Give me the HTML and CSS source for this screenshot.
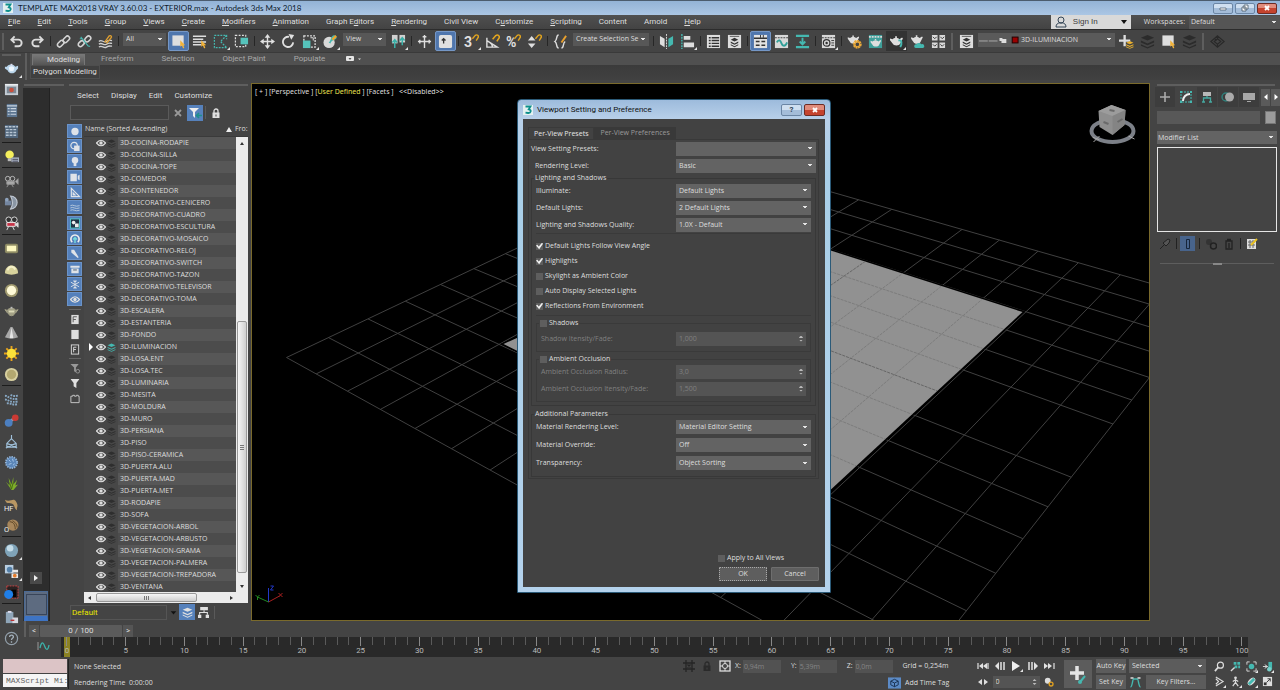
FILE: index.html
```html
<!DOCTYPE html>
<html lang="en">
<head>
<meta charset="utf-8">
<title>TEMPLATE MAX2018 VRAY 3.60.03 - EXTERIOR.max - Autodesk 3ds Max 2018</title>
<link rel="stylesheet" href="styles.css">
</head>
<body>
<svg class="defs" aria-hidden="true">
  <symbol id="logo" viewBox="0 0 10 10"><rect width="10" height="10" fill="#e4f1f1"/><path d="M2.500 1.500h5L5.800 4.300c3 .4 2.300 4-.8 3.700L2.500 7.600" fill="none" stroke="#0d8f8c" stroke-width="1.800"/></symbol>
  <symbol id="undo" viewBox="0 0 16 16"><path d="M3 6h7a3 3 0 0 1 0 7H6M6 2.500L2.500 6L6 9.500" fill="none" stroke="#dcdcdc" stroke-width="2"/></symbol>
  <symbol id="redo" viewBox="0 0 16 16"><path d="M13 6H6a3 3 0 0 0 0 7h4M10 2.500L13.500 6L10 9.500" fill="none" stroke="#dcdcdc" stroke-width="2"/></symbol>
  <symbol id="link" viewBox="0 0 16 16"><g fill="none" stroke="#d4d4d4" stroke-width="1.700"><rect x="1" y="8" width="8" height="4.600" rx="2.300" transform="rotate(-45 5 10.300)"/><rect x="7" y="3.400" width="8" height="4.600" rx="2.300" transform="rotate(-45 11 5.700)"/></g></symbol>
  <symbol id="unlink" viewBox="0 0 16 16"><g fill="none" stroke="#d4d4d4" stroke-width="1.700"><rect x="1" y="8" width="7" height="4.600" rx="2.300" transform="rotate(-45 4.500 10.300)"/><rect x="8" y="3" width="7" height="4.600" rx="2.300" transform="rotate(-45 11.500 5.300)"/></g><path d="M4 3l8 10M12 13l2 0M3 5l2 0" stroke="#45b8b0" stroke-width="1.200"/></symbol>
  <symbol id="bind" viewBox="0 0 16 16"><path d="M1 8c3-3 5 2 8 0s4-1 6-1M1 11c3-3 5 2 8 0s4-1 6-1M1 14c3-3 5 2 8 0s4-1 6-1" fill="none" stroke="#cfcfcf" stroke-width="1.400"/><path d="M7 9l5-7c2-1 3 1 2 2L9 10" fill="none" stroke="#e0a030" stroke-width="1.400"/></symbol>
  <symbol id="cursor" viewBox="0 0 8 10"><path d="M1 0v8l2-1.500L4.500 10l1.500-1-1.500-3H7z" fill="#f2b33a"/></symbol>
  <symbol id="selobj" viewBox="0 0 16 16"><rect x="1.500" y="1.500" width="12" height="11" fill="#dedede"/><use href="#cursor" x="9" y="6" width="7" height="10"/></symbol>
  <symbol id="selname" viewBox="0 0 16 16"><path d="M1 2.500h14M1 5.500h11M1 8.500h14M1 11.500h9" stroke="#dedede" stroke-width="1.600"/><use href="#cursor" x="9" y="6" width="7" height="10"/></symbol>
  <symbol id="selregion" viewBox="0 0 16 16"><path d="M1.500 1.500h13v4M14.500 14.500h-13v-13M14.500 1.500L8 8l6.500 6.500" fill="none" stroke="#45b8b0" stroke-width="1.300" stroke-dasharray="2 1.200"/></symbol>
  <symbol id="crossing" viewBox="0 0 16 16"><rect x="1.500" y="1.500" width="11" height="12" fill="none" stroke="#dedede" stroke-width="1.300" stroke-dasharray="2 1.500"/><rect x="7" y="4" width="8" height="7" fill="#55c3bb"/></symbol>
  <symbol id="move" viewBox="0 0 16 16"><path d="M8 2v12M2 8h12" stroke="#e0e0e0" stroke-width="1.500"/><path d="M8 0l3 4H5zM8 16l3-4H5zM0 8l4-3v6zM16 8l-4-3v6z" fill="#e0e0e0"/></symbol>
  <symbol id="rotate" viewBox="0 0 16 16"><path d="M13 9a5.500 5.500 0 1 1-4.500-6" fill="none" stroke="#e0e0e0" stroke-width="2"/><path d="M8 0l6 1-3 5z" fill="#e0e0e0"/></symbol>
  <symbol id="scale" viewBox="0 0 16 16"><rect x="2" y="2" width="12" height="12" fill="none" stroke="#e0e0e0" stroke-width="1.400" stroke-dasharray="2 1.300"/><rect x="1" y="7" width="8" height="8" fill="#55c3bb"/><path d="M9 4h3v3" stroke="#e0e0e0" fill="none"/></symbol>
  <symbol id="place" viewBox="0 0 16 16"><circle cx="6.500" cy="9" r="6" fill="#d8d8d8"/><path d="M6 9c2-1 2-5 4-7s6 1 4 3-5 1-6 5z" fill="#45b8b0"/><path d="M10 6l4-4" stroke="#f0a52c" stroke-width="2.500"/></symbol>
  <symbol id="pivot" viewBox="0 0 16 16"><rect x="1" y="1" width="6" height="9" fill="#d0d0d0"/><rect x="9" y="1" width="6" height="8" fill="#d0d0d0"/><path d="M4 6v9M1.500 9L4 6l2.500 3M12 4v8M9.500 7L12 4l2.500 3" stroke="#3bb0a8" stroke-width="1.600" fill="none"/></symbol>
  <symbol id="manip" viewBox="0 0 16 16"><path d="M8 1v14M1 8h14M6 3h4M3 6v4M13 6v4" stroke="#dedede" stroke-width="1.500"/></symbol>
  <symbol id="kbd" viewBox="0 0 16 16"><rect x="1" y="1" width="14" height="14" rx="2" fill="#e0e0e0"/><path d="M6 10V5M4 7l2-2 2 2" stroke="#333" stroke-width="1.400" fill="none"/></symbol>
  <symbol id="magnet" viewBox="0 0 8 8"><path d="M1 5l3-3.500c2-1.500 4 .5 3 2.500L5 7" fill="none" stroke="#e3a51e" stroke-width="1.500"/></symbol>
  <symbol id="anglesnap" viewBox="0 0 16 16"><path d="M2 4v10h11L2 7M8 14a6 6 0 0 0-3-5" fill="none" stroke="#dedede" stroke-width="1.500"/><use href="#magnet" x="7" y="0" width="9" height="9"/></symbol>
  <symbol id="spinsnap" viewBox="0 0 16 16"><path d="M1 7l4-5 4 5zM1 10l4 5 4-5z" fill="#dedede"/><use href="#magnet" x="8" y="0" width="8" height="8"/></symbol>
  <symbol id="braces" viewBox="0 0 16 16"><path d="M6 1C3 1 5 6 2 8c3 2 1 7 4 7M9 15c3 0 1-5 4-7" fill="none" stroke="#dedede" stroke-width="1.500"/><path d="M9 9l5-7" stroke="#e9a02e" stroke-width="2"/></symbol>
  <symbol id="mirror" viewBox="0 0 16 16"><path d="M1 2l5 3v9l-5-3z" fill="#dedede"/><path d="M15 2l-5 3v9l5-3z" fill="#45b8b0"/><path d="M8 0v16" stroke="#ddd" stroke-dasharray="2 1"/></symbol>
  <symbol id="align" viewBox="0 0 16 16"><path d="M2 0v16" stroke="#45b8b0" stroke-width="1.500" stroke-dasharray="2 1"/><path d="M4 2h7v4H4zM4 9h11v5H4z" fill="#dedede"/></symbol>
  <symbol id="listbox" viewBox="0 0 16 16"><rect x="1" y="1" width="14" height="14" fill="#dedede"/><path d="M3 4h2M6 4h8M3 7h2M6 7h8M3 10h2M6 10h8M3 13h2M6 13h8" stroke="#333" stroke-width="1.500"/></symbol>
  <symbol id="layerbox" viewBox="0 0 16 16"><rect x="1" y="1" width="14" height="14" fill="#dedede"/><path d="M8 4l4 2-4 2-4-2zM4 8l4 2 4-2v1.500l-4 2-4-2zM4 11l4 2 4-2v1l-4 2-4-2z" fill="#333"/><path d="M3 2.500h10" stroke="#555"/></symbol>
  <symbol id="ribbonbox" viewBox="0 0 16 16"><rect x="1" y="1" width="14" height="14" fill="#e2e2e2"/><path d="M1 4.500h14M3 8h4M9 8h4M3 12h4M9 12h4" stroke="#333" stroke-width="1.600"/><path d="M8 1v3M11 1v3" stroke="#333"/></symbol>
  <symbol id="curve" viewBox="0 0 16 16"><rect x="1" y="1" width="14" height="14" fill="#d8d8d8"/><path d="M1 4h14" stroke="#444" stroke-width="1.200" stroke-dasharray="2 1"/><path d="M3 9c2-4 4-2 5 1s4 4 6-1" fill="none" stroke="#2f9f98" stroke-width="2"/></symbol>
  <symbol id="schem" viewBox="0 0 16 16"><path d="M1 2h14M1 14h14" stroke="#45b8b0" stroke-width="2.600"/><path d="M8 4v7M5 8l3 3 3-3" stroke="#45b8b0" stroke-width="2" fill="none"/></symbol>
  <symbol id="matedit" viewBox="0 0 16 16"><rect x="1" y="1" width="14" height="14" fill="#d8d8d8"/><path d="M1 4h14" stroke="#333" stroke-dasharray="2 1"/><circle cx="6" cy="9.500" r="3.500" fill="none" stroke="#333" stroke-width="1.300"/><circle cx="6" cy="9.500" r="1.300" fill="#333"/><path d="M11 7h3M11 9.500h3M11 12h3" stroke="#333"/></symbol>
  <symbol id="pot" viewBox="0 0 16 12"><path d="M4 4c1-2 7-2 8 0l3-2 1 1-3 6c-1 3-8 3-9 0L1 5V3z" fill="#dedede"/><path d="M7 1.500h2" stroke="#dedede" stroke-width="2"/></symbol>
  <symbol id="potgear" viewBox="0 0 16 16"><use href="#pot" x="0" y="1" width="13" height="10"/><circle cx="11" cy="11" r="3.500" fill="none" stroke="#e9a93a" stroke-width="2.400" stroke-dasharray="2 .6"/><circle cx="11" cy="11" r="2.600" fill="none" stroke="#e9a93a" stroke-width="1.200"/></symbol>
  <symbol id="potwin" viewBox="0 0 16 16"><rect x="1" y="1" width="14" height="14" fill="#3f9f9a"/><path d="M1 3h14" stroke="#d8d8d8" stroke-width="2" stroke-dasharray="2 1"/><use href="#pot" x="2" y="5" width="12" height="9"/></symbol>
  <symbol id="potplay" viewBox="0 0 16 16"><use href="#pot" x="0" y="2" width="15" height="11"/><path d="M10 7c4-1 4 3 2 7" stroke="#45b8b0" stroke-width="2" fill="none"/></symbol>
  <symbol id="potcloud" viewBox="0 0 16 16"><use href="#pot" x="0" y="1" width="14" height="10"/><path d="M6 15a2 2 0 0 1 1-4 3 3 0 0 1 5 0 2 2 0 0 1 2 4z" fill="#45b8b0"/></symbol>
  <symbol id="grid4" viewBox="0 0 16 16"><path d="M1 1h6v6H1zM9 1h6v6H9zM1 9h6v6H1zM9 9h6v6H9z" fill="#d8d8d8"/><path d="M2 3l2 2 2-2M10 3l2 2 2-2M2 11l2 2 2-2M10 11l2 2 2-2" stroke="#333" fill="none"/></symbol>
  <symbol id="layers" viewBox="0 0 16 16"><path d="M8 1l7 3-7 3-7-3zM1 7l7 3 7-3v2l-7 3-7-3zM1 11l7 3 7-3v1.500l-7 3-7-3z" fill="currentColor"/></symbol>
  <symbol id="newlayer" viewBox="0 0 16 16"><path d="M6 1v12M0 7h12" stroke="#dedede" stroke-width="2.500"/><g color="#e9b02e"><use href="#layers" x="7" y="7" width="9" height="9"/></g></symbol>
  <symbol id="diamond" viewBox="0 0 16 16"><path d="M8 2l7 6-7 6-7-6zM8 5l3.500 3L8 11 4.500 8zM8 2v4M8 14v-4M5 5l2 2" fill="none" stroke="#292929" stroke-width="1.300"/></symbol>
  <symbol id="eye" viewBox="0 0 10 8"><path d="M.5 4Q5-1.500 9.500 4Q5 9.500.5 4z" fill="none" stroke="currentColor" stroke-width="1.200"/><circle cx="5" cy="4" r="1.700" fill="currentColor"/></symbol>
  <symbol id="funnel" viewBox="0 0 10 10"><path d="M0 0h10L6.500 4.500V10l-3-2V4.500z" fill="currentColor"/></symbol>
  <symbol id="lock" viewBox="0 0 10 10"><path d="M1.500 4.500h7V10h-7z" fill="currentColor"/><path d="M3 5V3a2 2 0 0 1 4 0v2" fill="none" stroke="currentColor" stroke-width="1.300"/><path d="M5 6.500v2" stroke="#444"/></symbol>
  <symbol id="tree" viewBox="0 0 10 10"><path d="M2 0h7v3H2zM0 7h3v3H0zM7 7h3v3H7z" fill="currentColor"/><path d="M1.500 7V5h7v2M5.500 3v2" stroke="currentColor" fill="none"/></symbol>
</svg>

<div class="app">
  <header class="titlebar">
    <svg class="logo"><use href="#logo"/></svg>
    <h1>TEMPLATE MAX2018 VRAY 3.60.03 - EXTERIOR.max - Autodesk 3ds Max 2018</h1>
    <div class="winbtns">
      <button class="winbtn" aria-label="Minimize"><svg viewBox="0 0 10 8"><path d="M2 4h6v2H2z" fill="#fff" stroke="#456" stroke-width=".7"/></svg></button>
      <button class="winbtn" aria-label="Restore"><svg viewBox="0 0 10 8"><path d="M4 1h4v4H4zM2 3h4v4H2z" fill="#fff" stroke="#456" stroke-width=".8"/></svg></button>
      <button class="winbtn winbtn-close" aria-label="Close"><svg viewBox="0 0 10 8"><path d="M3 2l4 4M7 2L3 6" stroke="#fff" stroke-width="1.800"/></svg></button>
    </div>
  </header>

  <nav class="menubar">
    <a href="#"><u>F</u>ile</a><a href="#"><u>E</u>dit</a><a href="#"><u>T</u>ools</a><a href="#"><u>G</u>roup</a><a href="#"><u>V</u>iews</a><a href="#"><u>C</u>reate</a><a href="#"><u>M</u>odifiers</a><a href="#"><u>A</u>nimation</a><a href="#">Graph E<u>d</u>itors</a><a href="#"><u>R</u>endering</a><a href="#">Civil View</a><a href="#">C<u>u</u>stomize</a><a href="#"><u>S</u>cripting</a><a href="#">Content</a><a href="#">Arnold</a><a href="#"><u>H</u>elp</a>
    <div class="account">
      <button class="signin"><svg viewBox="0 0 12 12"><circle cx="6" cy="4" r="3" fill="none" stroke="#345" /><path d="M1 11c0-3 2-4 3.500-4h3C9 7 11 8 11 11z" fill="none" stroke="#345"/></svg><span>Sign In</span><i class="caret-dark"></i></button>
      <label class="wslabel" for="ws">Workspaces:</label>
      <select id="ws" class="wsselect"><option>Default</option></select>
    </div>
  </nav>

  <div class="toolbar">
    <i class="grip"></i>
    <button class="tb" aria-label="Undo"><svg><use href="#undo"/></svg></button>
    <button class="tb" aria-label="Redo"><svg><use href="#redo"/></svg></button>
    <i class="sep"></i>
    <button class="tb" aria-label="Link"><svg><use href="#link"/></svg></button>
    <button class="tb" aria-label="Unlink"><svg><use href="#unlink"/></svg></button>
    <button class="tb" aria-label="Bind"><svg><use href="#bind"/></svg></button>
    <i class="sep"></i>
    <select class="tbselect" aria-label="Selection filter"><option>All</option></select>
    <button class="tb on" aria-label="Select object"><svg><use href="#selobj"/></svg></button>
    <button class="tb" aria-label="Select by name"><svg><use href="#selname"/></svg></button>
    <button class="tb fly" aria-label="Region"><svg><use href="#selregion"/></svg></button>
    <button class="tb" aria-label="Crossing"><svg><use href="#crossing"/></svg></button>
    <i class="sep"></i>
    <button class="tb" aria-label="Move"><svg><use href="#move"/></svg></button>
    <button class="tb" aria-label="Rotate"><svg><use href="#rotate"/></svg></button>
    <button class="tb fly" aria-label="Scale"><svg><use href="#scale"/></svg></button>
    <button class="tb fly" aria-label="Place"><svg><use href="#place"/></svg></button>
    <select class="tbselect" aria-label="Coordinate system"><option>View</option></select>
    <button class="tb fly" aria-label="Pivot"><svg><use href="#pivot"/></svg></button>
    <i class="sep"></i>
    <button class="tb" aria-label="Manipulate"><svg><use href="#manip"/></svg></button>
    <button class="tb on" aria-label="Keyboard override"><svg><use href="#kbd"/></svg></button>
    <i class="sep"></i>
    <button class="tb fly" aria-label="Snaps"><svg viewBox="0 0 16 16"><text x="0" y="14" font-size="15" font-weight="bold" fill="#e0e0e0">3</text><use href="#magnet" x="8" y="0" width="8" height="8"/></svg></button>
    <button class="tb" aria-label="Angle snap"><svg><use href="#anglesnap"/></svg></button>
    <button class="tb" aria-label="Percent snap"><svg viewBox="0 0 16 16"><text x="0" y="14" font-size="15" font-weight="bold" fill="#dedede">%</text><use href="#magnet" x="8" y="0" width="8" height="8"/></svg></button>
    <button class="tb" aria-label="Spinner snap"><svg><use href="#spinsnap"/></svg></button>
    <i class="sep"></i>
    <button class="tb" aria-label="Edit selection sets"><svg><use href="#braces"/></svg></button>
    <select class="tbselect tbselect-sets" aria-label="Selection sets"><option>Create Selection Se</option></select>
    <i class="sep"></i>
    <button class="tb" aria-label="Mirror"><svg><use href="#mirror"/></svg></button>
    <button class="tb fly" aria-label="Align"><svg><use href="#align"/></svg></button>
    <i class="sep"></i>
    <button class="tb" aria-label="Scene explorer"><svg><use href="#listbox"/></svg></button>
    <button class="tb" aria-label="Layer explorer"><svg><use href="#layerbox"/></svg></button>
    <i class="sep"></i>
    <button class="tb on" aria-label="Ribbon"><svg><use href="#ribbonbox"/></svg></button>
    <button class="tb" aria-label="Curve editor"><svg><use href="#curve"/></svg></button>
    <button class="tb" aria-label="Schematic view"><svg><use href="#schem"/></svg></button>
    <i class="sep"></i>
    <button class="tb fly" aria-label="Material editor"><svg><use href="#matedit"/></svg></button>
    <i class="sep"></i>
    <button class="tb" aria-label="Render setup"><svg><use href="#potgear"/></svg></button>
    <button class="tb" aria-label="Rendered frame"><svg><use href="#potwin"/></svg></button>
    <button class="tb fly dark" aria-label="Render"><svg><use href="#potplay"/></svg></button>
    <button class="tb" aria-label="Cloud render"><svg><use href="#potcloud"/></svg></button>
    <button class="tb" aria-label="Gallery"><svg><use href="#grid4"/></svg></button>
    <i class="grip"></i>
    <button class="tb" aria-label="Layers"><svg><use href="#layerbox"/></svg></button>
    <div class="layerpick">
      <svg viewBox="0 0 44 10"><path d="M1 6h9M11 6h9" stroke="#aaa"/><path d="M24 4h5v4h-5zM22 3h3v3h-3z" fill="#ddd"/><rect x="35" y="2" width="6" height="6" fill="#900" stroke="#200"/></svg>
      <select aria-label="Layer"><option>3D-ILUMINACION</option></select>
    </div>
    <button class="tb" aria-label="New layer"><svg><use href="#newlayer"/></svg></button>
    <button class="tb dim" aria-label="Add to layer"><svg><use href="#layers"/></svg></button>
    <button class="tb" aria-label="Select in layer"><svg><use href="#selobj"/></svg></button>
    <button class="tb dim" aria-label="Set layer"><svg><use href="#layers"/></svg></button>
    <i class="grip"></i>
    <button class="tb" aria-label="Container"><svg><use href="#diamond"/></svg></button>
  </div>

  <div class="work">
    <div class="sidebar" id="sidebar">
      <i class="handle"></i>
      <button class="sb fly" aria-label="V-Ray frame"><svg viewBox="0 0 16 16"><path d="M3 6c2-3 7-3 9 0l3-1v3l-2 2c-1 4-8 4-9 0L1 8V6z" fill="#b8d4ea"/><path d="M5 7c2-2 4-2 6 0l-1 4H6z" fill="#eef7ff"/><path d="M7 3h2v2H7z" fill="#dde"/></svg></button>
      <button class="sb" aria-label="Frame buffer"><svg viewBox="0 0 16 16"><rect x="1" y="2" width="14" height="12" fill="#c4ccd4"/><path d="M1 3h14" stroke="#fff"/><rect x="3" y="5" width="10" height="7" fill="#7c8894"/><circle cx="8" cy="8.500" r="2.500" fill="#c9503c"/></svg></button>
      <button class="sb" aria-label="Lister"><svg viewBox="0 0 16 16"><rect x="3" y="1" width="11" height="14" fill="#5c7590"/><path d="M3 3h11M4 6h2M7 6h6M4 9h2M7 9h6M4 12h2M7 12h6" stroke="#c8d4e0" stroke-width="1.300"/></svg></button>
      <button class="sb" aria-label="Table"><svg viewBox="0 0 16 16"><rect x="1" y="1" width="14" height="14" fill="#51667c"/><path d="M1 3h14M2 6h12M2 9h12M2 12h12" stroke="#b8c6d4" stroke-width="1.500" stroke-dasharray="3 1"/></svg></button>
      <i class="rule"></i>
      <button class="sb" aria-label="Light lister"><svg viewBox="0 0 16 16"><circle cx="6" cy="6" r="4.500" fill="#f4ee5c"/><path d="M4 10h4v3H4z" fill="#bbb"/><path d="M8 9h8v5H8z" fill="#aab4c4"/><path d="M9 11h6M9 13h6" stroke="#445"/></svg></button>
      <i class="rule"></i>
      <button class="sb" aria-label="Camera"><svg viewBox="0 0 16 16"><circle cx="4" cy="5" r="2.500" fill="none" stroke="#bbb"/><circle cx="9" cy="5" r="2.500" fill="none" stroke="#bbb"/><path d="M3 8h8v3H3zM5 11l-2 3M8 11l2 3M15 5v6l-3-3z" fill="#aaa" stroke="#999"/></svg></button>
      <button class="sb" aria-label="Dome camera"><svg viewBox="0 0 16 16"><path d="M7 1a7 7 0 0 1 0 14q4-7 0-14z" fill="#8a96a4" stroke="#c0c8d2" stroke-width="1.200"/><path d="M1 6h7v5H1z" fill="#7486a0"/><circle cx="3" cy="5" r="2" fill="#8ea2bc"/></svg></button>
      <button class="sb" aria-label="Physical camera"><svg viewBox="0 0 16 16"><circle cx="5" cy="4" r="3" fill="#333" stroke="#ddd"/><circle cx="11" cy="4" r="3" fill="#333" stroke="#ddd"/><path d="M3 7h9v4H3z" fill="#c63347" stroke="#eee"/><path d="M12 9l3-2v5zM5 11l-2 4M9 11l2 4" stroke="#ddd" fill="#ddd"/></svg></button>
      <i class="rule"></i>
      <button class="sb" aria-label="Plane light"><svg viewBox="0 0 16 16"><rect x="1" y="3" width="14" height="10" rx="2" fill="#8d8a63"/><rect x="3" y="5" width="10" height="6" fill="#fdf8c0"/></svg></button>
      <button class="sb" aria-label="Dome light"><svg viewBox="0 0 16 16"><path d="M1 12C1 1 15 1 15 12Q8 15 1 12z" fill="#d8d29c"/><path d="M4 9c1-5 6-5 8-1" stroke="#f4f0c8" stroke-width="2" fill="none"/></svg></button>
      <button class="sb" aria-label="Sphere light"><svg viewBox="0 0 16 16"><circle cx="8" cy="8" r="7" fill="#a29b70"/><circle cx="8" cy="8" r="5" fill="#fffad8"/></svg></button>
      <button class="sb" aria-label="Mesh light"><svg viewBox="0 0 16 16"><path d="M4 6c2-2 6-2 8 0l-1 5c-1 2-5 2-6 0zM12 7l3-1-3 4M4 7L1 6l3 4" fill="#a3a186" stroke="#a3a186"/><path d="M5 8h6" stroke="#dcdab8" stroke-width="2"/><path d="M7 3h2v2H7z" fill="#bbb"/></svg></button>
      <button class="sb" aria-label="IES light"><svg viewBox="0 0 16 16"><path d="M7 2h2l6 11Q8 16 1 13z" fill="#a8a8a8"/><path d="M8 3l2 11H6z" fill="#e6e6e6"/></svg></button>
      <button class="sb" aria-label="Sun"><svg viewBox="0 0 16 16"><path d="M8 0v16M0 8h16M2.500 2.500l11 11M13.500 2.500l-11 11" stroke="#e8a31c" stroke-width="2"/><circle cx="8" cy="8" r="5" fill="#fbe23a"/></svg></button>
      <button class="sb" aria-label="Ambient light"><svg viewBox="0 0 16 16"><circle cx="8" cy="8" r="7" fill="#d8d0a0"/><circle cx="8" cy="8" r="5" fill="#b3a870"/></svg></button>
      <i class="rule"></i>
      <button class="sb" aria-label="Particles"><svg viewBox="0 0 16 16"><path d="M1 4c4 0 5 5 14 3M1 8c4 0 5 4 14 2M3 12c4 0 6 2 11 1M7 3c3 2 5 1 8 1" fill="none" stroke="#88a8c4" stroke-width="2" stroke-dasharray="2 1"/></svg></button>
      <button class="sb" aria-label="Metaball"><svg viewBox="0 0 16 16"><path d="M5 10l7-5" stroke="#99a" stroke-width="3"/><circle cx="5" cy="10.500" r="4.200" fill="#4c7fc0"/><circle cx="12" cy="5" r="3.500" fill="#cc3a34"/></svg></button>
      <button class="sb" aria-label="Proxy"><svg viewBox="0 0 16 16"><path d="M8 1v5M8 5L3 10v4h10v-4zM3 10l10 4M13 10L3 14M4 14l-2 1M12 14l2 1" fill="none" stroke="#9fc0da" stroke-width="1.200"/></svg></button>
      <button class="sb" aria-label="Fur"><svg viewBox="0 0 16 16"><circle cx="8" cy="8" r="6" fill="#5b86b8" stroke="#8fb2d8" stroke-width="2" stroke-dasharray="1.500 1"/><path d="M5 5l2 2M9 4l1 3M5 10l3-1M10 11l1-2" stroke="#a9c8e8"/></svg></button>
      <button class="sb" aria-label="Grass"><svg viewBox="0 0 16 16"><path d="M8 15L2 6l4 4-1-8 3 7 2-8 0 8 4-5-2 6 3-1-5 6z" fill="#7fae2a"/><path d="M8 14L6 7M8 14l2-8" stroke="#436c12"/></svg></button>
      <button class="sb" aria-label="Hair farm"><svg viewBox="0 0 16 16"><path d="M1 3c6 3 9-3 12 2s0 6 1 9c-4-2-2-6-6-7S3 8 1 3z" fill="#b99763"/><text x="0" y="15" font-size="8" fill="#eee">HF</text></svg></button>
      <button class="sb" aria-label="Ornatrix"><svg viewBox="0 0 16 16"><circle cx="9.500" cy="7.500" r="6" fill="#a8875c"/><path d="M6 4c4 0 6 3 6 8M9 3c4 2 5 5 5 7" fill="none" stroke="#5c4424"/><text x="0" y="15" font-size="8" fill="#eee">O</text></svg></button>
      <i class="rule"></i>
      <button class="sb fly" aria-label="Material sphere"><svg viewBox="0 0 16 16"><circle cx="8" cy="8" r="7" fill="#7fa3b8"/><circle cx="6.500" cy="5.500" r="3.500" fill="#c4dce8"/></svg></button>
      <button class="sb fly" aria-label="Bitmap convert"><svg viewBox="0 0 16 16"><rect x="1" y="1" width="9" height="9" fill="#b8cde0"/><circle cx="6" cy="6" r="3" fill="#5580a8"/><path d="M9 6h6v3H9zM8 10h7v5H8z" fill="#e8e8e8"/><circle cx="11.500" cy="12.500" r="2" fill="#e47a28"/></svg></button>
      <button class="sb" aria-label="Toggle spheres"><svg viewBox="0 0 16 16"><rect x="3" y="1" width="12" height="13" fill="#2a2222" stroke="#c44" stroke-dasharray="2 1"/><path d="M8 5h5v8H8z" fill="#050505"/><circle cx="5" cy="10" r="4.800" fill="#1f7fe8"/></svg></button>
      <i class="rule"></i>
      <button class="sb" aria-label="Clipboard"><svg viewBox="0 0 16 16"><rect x="2" y="2" width="8" height="12" fill="#8fa5b8"/><path d="M4 1h4v2H4z" fill="#dde"/><rect x="9" y="8" width="6" height="6" fill="#d8d8e0"/><path d="M7 11h4" stroke="#b33" stroke-width="1.500"/></svg></button>
      <button class="sb" aria-label="Help"><svg viewBox="0 0 16 16"><circle cx="8" cy="8" r="6.500" fill="none" stroke="#93a0ab" stroke-width="1.300"/><path d="M6 6.500c0-3 4.500-2.500 4 0-.3 1.300-2 1.300-2 3M8 11v1.500" fill="none" stroke="#a5b2bd" stroke-width="1.400"/></svg></button>
    </div>

    <div class="main">
      <div class="ribbon">
        <div class="ribbon-tabs">
          <button class="rtab active">Modeling</button><button class="rtab">Freeform</button><button class="rtab">Selection</button><button class="rtab">Object Paint</button><button class="rtab">Populate</button>
          <button class="rmin" aria-label="Minimize ribbon"><svg viewBox="0 0 16 6"><rect width="8" height="5" rx="1" fill="#e6e6e6"/><path d="M2.500 2h3L4 4z" fill="#555"/><path d="M12 2.500h3L13.500 4z" fill="#ddd"/></svg></button>
        </div>
        <div class="ribbon-panel"><button class="rpanel">Polygon Modeling</button></div>
      </div>

      <div class="middle">
        <div class="leftdock">
          <div class="handles"><i></i><i></i></div>
          <div class="leftdock-body">
            <div class="strip">
              <button class="strip-play" aria-label="Expand"><svg viewBox="0 0 8 8"><path d="M2 1l4 3-4 3z" fill="#eee"/></svg></button>
              <button class="strip-view" aria-label="Viewport layout"></button>
            </div>
            <section class="explorer">
              <nav class="ex-menu"><a href="#">Select</a><a href="#">Display</a><a href="#">Edit</a><a href="#">Customize</a></nav>
              <div class="ex-search">
                <input type="text" aria-label="Search">
                <button aria-label="Clear"><svg viewBox="0 0 10 10"><path d="M2 2l6 6M8 2L2 8" stroke="#999" stroke-width="1.800"/></svg></button>
                <button class="blue" aria-label="Filter"><svg viewBox="0 0 14 12"><path d="M1 1h10L7 5v6L5 9V5z" fill="#eee"/><path d="M14 8.500H9M11 6L8.500 8.500 11 11" stroke="#1d8f8c" stroke-width="1.600" fill="none"/></svg></button>
                <i></i>
                <button aria-label="Lock"><svg class="lt"><use href="#lock"/></svg></button>
              </div>
              <div class="ex-body">
                <div class="filters">
                  <button class="f" aria-label="Geometry"><svg viewBox="0 0 12 12"><circle cx="6" cy="6" r="4" fill="#dfe3e8"/></svg></button>
                  <button class="f" aria-label="Shapes"><svg viewBox="0 0 12 12"><circle cx="5" cy="5" r="3.500" fill="none" stroke="#dfe3e8" stroke-width="1.300"/><path d="M5 5h6v6H5z" fill="#dfe3e8"/></svg></button>
                  <button class="f" aria-label="Lights"><svg viewBox="0 0 12 12"><circle cx="6" cy="4.500" r="3.500" fill="#dfe3e8"/><path d="M4.500 7h3v4h-3z" fill="#dfe3e8"/></svg></button>
                  <button class="f" aria-label="Cameras"><svg viewBox="0 0 12 12"><path d="M1 2h7v8H1zM9 4l2-1v6l-2-1z" fill="#dfe3e8"/></svg></button>
                  <button class="f" aria-label="Helpers"><svg viewBox="0 0 12 12"><path d="M2 1.500v9h9zM4 6.500v2h2z" fill="none" stroke="#dfe3e8" stroke-width="1.300"/></svg></button>
                  <button class="f" aria-label="Space warps"><svg viewBox="0 0 12 12"><path d="M1 4c3-2 5 2 10 0M1 6.500c3-2 5 2 10 0M1 9c3-2 5 2 10 0" fill="none" stroke="#bcd"/></svg></button>
                  <button class="f" aria-label="Groups"><svg viewBox="0 0 12 12"><rect x="1" y="1" width="10" height="10" fill="#234" stroke="#5cc"/><circle cx="4.500" cy="5" r="2" fill="#eee"/><path d="M6 6h4v4H6z" fill="#eee"/></svg></button>
                  <button class="f" aria-label="Xrefs"><svg viewBox="0 0 12 12"><path d="M3 10a4.500 4.500 0 1 1 6 0" fill="none" stroke="#eee" stroke-width="1.800"/><path d="M6 11V5M4 7l2-2 2 2" stroke="#7dd" stroke-width="1.500" fill="none"/></svg></button>
                  <button class="f" aria-label="Bones"><svg viewBox="0 0 12 12"><path d="M2 2l3 0 5 8-1 1-7-6z" fill="#dfe3e8"/></svg></button>
                  <button class="f" aria-label="Containers"><svg viewBox="0 0 12 12"><path d="M1 2h10v2H1zM2 5h8v5H2z" fill="#dfe3e8"/><path d="M4 6.500h4" stroke="#456"/></svg></button>
                  <button class="f" aria-label="Frozen"><svg viewBox="0 0 12 12"><path d="M6 1v10M1.500 3.500l9 5M10.500 3.500l-9 5M4 2l2 1 2-1M4 10l2-1 2 1" fill="none" stroke="#dfe3e8"/></svg></button>
                  <button class="f" aria-label="Hidden"><svg class="lt" viewBox="-1 -1 12 10"><use href="#eye" width="10" height="8"/></svg></button>
                  <hr>
                  <button class="g" aria-label="All"><svg viewBox="0 0 12 12"><rect x="2" y="1" width="8" height="10" fill="#ddd"/><path d="M4 9V3h4M4 6h3" stroke="#555" fill="none"/></svg></button>
                  <button class="g" aria-label="None"><svg viewBox="0 0 12 12"><rect x="2" y="1" width="8" height="10" fill="#ddd"/></svg></button>
                  <button class="g" aria-label="Invert"><svg viewBox="0 0 12 12"><rect x="2" y="1" width="8" height="10" fill="none" stroke="#ddd"/><path d="M4.500 9V3.500h3M4.500 6h2.500" stroke="#ddd" fill="none"/></svg></button>
                  <hr>
                  <button class="g" aria-label="Filter off"><svg viewBox="0 0 12 12"><path d="M1 1h9L7 5v5L5 9V5z" fill="#999"/><circle cx="9" cy="9" r="2" fill="none" stroke="#999"/></svg></button>
                  <button class="g" aria-label="Filter"><svg viewBox="-1 -1 12 12" class="lt"><use href="#funnel" width="10" height="10"/></svg></button>
                  <button class="g" aria-label="Container"><svg viewBox="0 0 12 12"><path d="M1.500 3.500h2v-1h2v1h2v-1h2v1h1v7h-9z" fill="none" stroke="#ccc"/></svg></button>
                </div>
                <div class="tree">
                  <div class="tree-head"><span>Name (Sorted Ascending)</span><i></i><b>Fro:</b></div>
                  <div class="tree-body">
                    <ul id="rows"></ul>
                    <div class="vscroll"><i class="up"></i><div class="thumb"><b></b></div><i class="down"></i></div>
                  </div>
                  <div class="hscroll"><i class="lf"></i><div class="thumb"><b></b></div><i class="rt"></i></div>
                </div>
              </div>
              <div class="ex-foot">
                <input type="text" value="Default" aria-label="Explorer name">
                <button class="drop" aria-label="Explorer list"><svg viewBox="0 0 8 8"><path d="M2 3h4L4 5.500z" fill="#111"/></svg></button>
                <button class="blue" aria-label="By layer"><svg class="lt"><use href="#layers"/></svg></button>
                <button aria-label="By hierarchy"><svg class="lt"><use href="#tree"/></svg></button>
                <i></i>
              </div>
            </section>
          </div>
        </div>

        <div class="viewport">
          <svg class="scene" id="scene" viewBox="252 84 898 536" preserveAspectRatio="xMidYMid slice"></svg>
          <p class="vlabel">[ + ] [Perspective ] [<em>User Defined</em> ] [Facets ]&nbsp;&nbsp; &lt;&lt;Disabled&gt;&gt;</p>

          <div class="dialog" role="dialog" aria-labelledby="dlgtitle">
            <div class="dlg-title">
              <svg class="logo"><use href="#logo"/></svg>
              <h2 id="dlgtitle">Viewport Setting and Preference</h2>
              <button class="winbtn" aria-label="Help">?</button>
              <button class="winbtn winbtn-close" aria-label="Close"><svg viewBox="0 0 10 8"><path d="M3 2l4 4M7 2L3 6" stroke="#fff" stroke-width="1.800"/></svg></button>
            </div>
            <form class="dlg-body">
              <div class="tabs"><button type="button" class="tab active">Per-View Presets</button><button type="button" class="tab">Per-View Preferences</button></div>
              <div class="pane">
                <div class="field wide first"><label for="p1">View Setting Presets:</label><select id="p1"><option></option></select></div>
                <div class="field wide"><label for="p2">Rendering Level:</label><select id="p2"><option>Basic</option></select></div>
                <fieldset class="group">
                  <legend>Lighting and Shadows</legend>
                  <div class="field"><label for="p3">Illuminate:</label><select id="p3"><option>Default Lights</option></select></div>
                  <div class="field"><label for="p4">Default Lights:</label><select id="p4"><option>2 Default Lights</option></select></div>
                  <div class="field"><label for="p5">Lighting and Shadows Quality:</label><select id="p5"><option>1.0X - Default</option></select></div>
                  <div class="checks">
                    <label><input type="checkbox" checked>Default Lights Follow View Angle</label>
                    <label><input type="checkbox" checked>Highlights</label>
                    <label><input type="checkbox">Skylight as Ambient Color</label>
                    <label><input type="checkbox">Auto Display Selected Lights</label>
                    <label><input type="checkbox" checked>Reflections From Environment</label>
                  </div>
                  <fieldset class="sub sub-shadow">
                    <legend><label><input type="checkbox">Shadows</label></legend>
                    <div class="field off"><label for="p6">Shadow Itensity/Fade:</label><span class="spin"><input id="p6" type="text" value="1,000" disabled><i></i></span></div>
                  </fieldset>
                  <fieldset class="sub">
                    <legend><label><input type="checkbox">Ambient Occlusion</label></legend>
                    <div class="field off"><label for="p7">Ambient Occlusion Radius:</label><span class="spin"><input id="p7" type="text" value="3,0" disabled><i></i></span></div>
                    <div class="field off"><label for="p8">Ambient Occlusion Itensity/Fade:</label><span class="spin"><input id="p8" type="text" value="1,500" disabled><i></i></span></div>
                  </fieldset>
                </fieldset>
                <fieldset class="group extra">
                  <legend>Additional Parameters</legend>
                  <div class="field"><label for="p9">Material Rendering Level:</label><select id="p9"><option>Material Editor Setting</option></select></div>
                  <div class="field"><label for="p10">Material Override:</label><select id="p10"><option>Off</option></select></div>
                  <div class="field"><label for="p11">Transparency:</label><select id="p11"><option>Object Sorting</option></select></div>
                </fieldset>
              </div>
              <div class="dlg-foot">
                <label><input type="checkbox">Apply to All Views</label>
                <div><button type="button" class="btn focus">OK</button><button type="button" class="btn">Cancel</button></div>
              </div>
            </form>
          </div>
        </div>

        <aside class="command">
          <i class="bar"></i>
          <div class="ctabs">
            <button class="ct" aria-label="Create"><svg viewBox="0 0 14 14"><path d="M7 2v10M2 7h10" stroke="#aaa" stroke-width="1.600"/></svg></button>
            <button class="ct active" aria-label="Modify"><svg viewBox="0 0 14 14"><rect x="2" y="2" width="10" height="10" fill="none" stroke="#45b8b0" stroke-dasharray="2 1"/><path d="M4 11c0-4 3-7 7-7" fill="none" stroke="#eee" stroke-width="2"/><path d="M1 1h2v2H1zM11 1h2v2h-2zM1 11h2v2H1zM11 11h2v2h-2z" fill="#45b8b0"/></svg></button>
            <button class="ct" aria-label="Hierarchy"><svg viewBox="0 0 14 14"><path d="M3 2h8v4H3z" fill="#b8b8b8"/><path d="M7 6v2M3.500 12V8h7v4M2 12h3M9 12h3" fill="none" stroke="#45a8a0" stroke-width="1.300"/></svg></button>
            <button class="ct" aria-label="Motion"><svg viewBox="0 0 14 14"><circle cx="5" cy="7" r="4" fill="none" stroke="#2f7f7a" stroke-width="1.500"/><circle cx="8.500" cy="7" r="4.500" fill="#aaa"/></svg></button>
            <button class="ct" aria-label="Display"><svg viewBox="0 0 14 14"><path d="M1 3h12v7H1zM5 11h4v1H5z" fill="#a8a8a8"/></svg></button>
            <button class="arrow" aria-label="Previous"><svg viewBox="0 0 8 8"><path d="M5.500 1v6L2 4z" fill="#fff"/></svg></button><button class="arrow" aria-label="Next"><svg viewBox="0 0 8 8"><path d="M2.500 1v6L6 4z" fill="#fff"/></svg></button>
          </div>
          <div class="namerow"><input type="text" aria-label="Object name"><button aria-label="Object color"></button></div>
          <select class="modlist" aria-label="Modifier list"><option>Modifier List</option></select>
          <div class="stack"></div>
          <div class="stacktools">
            <button aria-label="Pin"><svg viewBox="0 0 12 12"><path d="M1 11l4-4M4 5l3 3 3-3 1-3-2-1z" stroke="#222" fill="#555"/></svg></button><i></i>
            <button class="sel" aria-label="Show end result"><svg viewBox="0 0 12 12"><path d="M4.500 1.500h3v9h-3z" fill="none" stroke="#16253a"/></svg></button><i></i>
            <button aria-label="Make unique"><svg viewBox="0 0 12 12"><circle cx="4" cy="4" r="3" fill="#333"/><circle cx="8.500" cy="8" r="3" fill="none" stroke="#222" stroke-width="1.500"/></svg></button>
            <button aria-label="Remove"><svg viewBox="0 0 12 12"><path d="M3 3h6v8H3zM4 1.500h4M6 5v5" fill="none" stroke="#222" stroke-width="1.300"/></svg></button><i></i>
            <button aria-label="Configure"><svg viewBox="0 0 12 12"><path d="M1 1h9v10H1z" fill="#ddd"/><path d="M2 4h7M2 7h7M4 2v8M7 2v8" stroke="#666"/><path d="M5 7l6-6" stroke="#e8c020" stroke-width="2"/></svg></button>
          </div>
          <div class="roll"><b></b></div>
        </aside>
      </div>

      <div class="timeline">
        <div class="slider"><button aria-label="Previous frame">&lt;</button><span>0 / 100</span><button aria-label="Next frame">&gt;</button></div>
        <div class="track"><svg class="mini" viewBox="0 0 14 10"><path d="M1 1v8" stroke="#999"/><path d="M3 7c2-9 4-4 5-1s3 4 4-2" fill="none" stroke="#3cb2aa" stroke-width="1.300"/></svg><div class="ruler" id="ruler"></div></div>
      </div>
    </div>
  </div>

  <footer class="status">
    <div class="listener"><div class="pink"></div><input type="text" value="MAXScript Mi:" aria-label="Listener"></div>
    <div class="prompt"><p>None Selected</p><p>Rendering Time&nbsp; 0:00:00</p></div>
    <div class="coords">
      <div class="crow">
        <svg viewBox="0 0 12 12"><path d="M3 3h6v6H3zM0 3h3V0M9 0v3h3M0 9h3v3M12 9H9v3M4.500 4.500l3 3M7.500 4.500l-3 3" stroke="#252525" fill="none" stroke-width="1.300"/></svg>
        <svg class="dk" viewBox="-1 -1 12 12"><use href="#lock" width="10" height="10"/></svg>
        <svg viewBox="0 0 12 12"><rect x="1" y="1" width="10" height="10" fill="none" stroke="#ddd" stroke-width="1.300"/><path d="M6 1v10M1 6h10" stroke="#ddd"/><circle cx="6" cy="6" r="2.500" fill="#444" stroke="#ddd"/></svg>
        <label for="cx">X:</label><input id="cx" type="text" value="0,94m"><label for="cy">Y:</label><input id="cy" type="text" value="5,39m"><label for="cz">Z:</label><input id="cz" type="text" value="0,0m">
        <span>Grid = 0,254m</span>
      </div>
      <button class="tag"><svg viewBox="0 0 14 12"><rect width="14" height="12" fill="#5b8ac6"/><path d="M7 2l4 2v4l-4 2-4-2V4zM3 4l4 2 4-2M7 6v4" fill="none" stroke="#18304f"/></svg>Add Time Tag</button>
    </div>
    <div class="play">
      <div class="prow">
        <button aria-label="Start"><svg viewBox="0 0 12 10"><path d="M1 2v6M11 2v6" stroke="#e2e2e2" stroke-width="1.200"/><path d="M6 2v6L2 5zM10 2v6L6 5z" fill="#e2e2e2"/></svg></button>
        <button aria-label="Previous"><svg viewBox="0 0 12 10"><path d="M5 1v8L1 5z" fill="#e2e2e2"/><path d="M7 1v8M10 1v8" stroke="#e2e2e2" stroke-width="1.500"/></svg></button>
        <button class="fly" aria-label="Play"><svg viewBox="0 0 12 10"><path d="M2 0v10l8-5z" fill="#eee"/></svg></button>
        <button aria-label="Next"><svg viewBox="0 0 12 10"><path d="M7 1v8l4-4z" fill="#e2e2e2"/><path d="M2 1v8M5 1v8" stroke="#e2e2e2" stroke-width="1.500"/></svg></button>
        <button aria-label="End"><svg viewBox="0 0 12 10"><path d="M11 2v6" stroke="#e2e2e2" stroke-width="1.200"/><path d="M1 2v6l4-3zM5 2v6l4-3z" fill="#e2e2e2"/></svg></button>
      </div>
      <div class="prow">
        <button aria-label="Key mode"><svg viewBox="0 0 12 10"><path d="M5 2v6L1 5zM7 2v6l4-3z" fill="#ddd"/></svg></button>
        <span class="spin frame"><input type="text" value="0" aria-label="Frame"><i></i></span>
        <button aria-label="Time configuration"><svg viewBox="0 0 12 12"><circle cx="4.500" cy="4.500" r="3.500" fill="#ddd"/><circle cx="8.500" cy="8.500" r="2.300" fill="none" stroke="#e0a020" stroke-width="1.600"/></svg></button>
      </div>
    </div>
    <button class="bigkey" aria-label="Set keys"><svg viewBox="0 0 24 24"><path d="M11 4v14M4 11h14" stroke="#e4e4e4" stroke-width="3.500"/><path d="M14 20l5-6" stroke="#45b8b0" stroke-width="2"/><circle cx="14" cy="20" r="2" fill="#45b8b0"/></svg></button>
    <div class="keys">
      <button class="btn2">Auto Key</button><select class="keysel" aria-label="Key set"><option>Selected</option></select>
      <button class="btn2">Set Key</button><div class="kf"><svg viewBox="0 0 12 12"><path d="M1 11c2 0 2-8 3-8h4c1 0 1 8 3 8" fill="none" stroke="#45b8b0" stroke-width="1.400"/><path d="M1 2h3M8 2h3" stroke="#ddd" stroke-width="1.500"/></svg><button class="btn2">Key Filters...</button></div>
    </div>
    <div class="nav">
      <button aria-label="Zoom"><svg viewBox="0 0 12 12"><circle cx="7" cy="4.500" r="3.300" fill="none" stroke="#ddd" stroke-width="1.300"/><path d="M4.500 7L1 11" stroke="#ddd" stroke-width="1.800"/></svg></button>
      <button aria-label="Zoom all"><svg viewBox="0 0 12 12"><path d="M4 1h3v3H4zM8 1h3v3H8zM5 5h3v3H5zM9 5h2v3H9z" fill="#45b8b0"/><path d="M5 7l-4 4" stroke="#ddd" stroke-width="1.500"/></svg></button>
      <button class="fly" aria-label="Zoom extents"><svg viewBox="0 0 12 12"><path d="M1 4V1h3M8 1h3v3M11 8v3H8M4 11H1V8" fill="none" stroke="#ddd"/><circle cx="6" cy="6" r="3" fill="#45b8b0"/></svg></button>
      <button class="fly" aria-label="Zoom extents all"><svg viewBox="0 0 12 12"><path d="M7 1h4v8H7z" fill="#45b8b0"/><path d="M1 6h5M3 4l3 2-3 2" stroke="#ddd" fill="none"/><circle cx="8" cy="9" r="2.500" fill="#78d0ca"/></svg></button>
      <button class="fly" aria-label="Field of view"><svg viewBox="0 0 12 12"><path d="M2 1l8 5-8 5M2 3l3 3-3 3" fill="none" stroke="#ddd" stroke-width="1.200"/></svg></button>
      <button class="fly" aria-label="Walk"><svg viewBox="0 0 12 12"><circle cx="6" cy="2" r="1.500" fill="#ddd"/><path d="M6 3v4l-3 4M6 7l3 4M3 6l3-2 3 2" fill="none" stroke="#ddd" stroke-width="1.300"/></svg></button>
      <button class="fly" aria-label="Orbit"><svg viewBox="0 0 12 12"><ellipse cx="6" cy="6" rx="5" ry="3" transform="rotate(-45 6 6)" fill="#ddd"/><path d="M3 9l6-6" stroke="#45b8b0" stroke-width="3"/></svg></button>
      <button aria-label="Maximize"><svg viewBox="0 0 12 12"><rect x="1" y="1" width="10" height="10" fill="#ddd"/><path d="M5 7l4-4M6 3h3v3" stroke="#333" fill="none"/><path d="M2 7h3v3H2z" fill="#333"/></svg></button>
    </div>
  </footer>
</div>
<script src="app.js"></script>
</body>
</html>
```

FILE: styles.css
```css
* { box-sizing: border-box; }
body { margin: 0; background: #444; color: #dedede; font: 8px/12px Roboto, "Open Sans", sans-serif; overflow: hidden; }
button, input, select { font: inherit; color: inherit; margin: 0; padding: 0; border: 0; border-radius: 0; background: none; min-width: 0; }
button { display: flex; align-items: center; justify-content: center; }
h1, h2, p, ul, fieldset { margin: 0; padding: 0; border: 0; font-weight: normal; list-style: none; }
h1, h2 { font-size: 8px; }
a { color: inherit; text-decoration: none; }
.defs { position: absolute; width: 0; height: 0; }
.lt { color: #e0e0e0; }
.dk { color: #2a2a2a; }
svg text { font-family: Roboto, sans-serif; }

select {
  appearance: none; background-color: #636363; padding: 0 12px 0 3px;
  background-image: linear-gradient(to top right, transparent 50%, #e4e4e4 50%), linear-gradient(to top left, transparent 50%, #e4e4e4 50%);
  background-size: 2px 3px; background-repeat: no-repeat; background-position: right 6px center, right 4px center;
}

.app { display: flex; flex-direction: column; height: 100vh; }

/* window frame */
.titlebar { display: flex; align-items: center; height: 15px; padding: 0 3px; border-top: 1px solid #4b5c6e; background: linear-gradient(#93b3d6, #abc6e4); color: #0c1a2b; flex: none; }
.titlebar h1 { margin-left: 5px; flex: 1; white-space: nowrap; font-family: Lato, Roboto, sans-serif; }
.logo { width: 10px; height: 10px; flex: none; }
.winbtns { display: flex; gap: 2px; }
.winbtn { width: 20px; height: 11px; border: 1px solid #6b86a5; border-radius: 2px; background: linear-gradient(#cfdff0 45%, #a4bdd9 50%); color: #345; font-weight: bold; }
.winbtn svg { width: 10px; height: 8px; }
.winbtn-close { border-color: #6d2c25; background: linear-gradient(#e08c7c 45%, #c4432e 50%); }

.menubar { display: flex; align-items: center; gap: 17px; height: 15px; padding-left: 8px; background: linear-gradient(#505050, #434343); flex: none; white-space: nowrap; border-bottom: 1px solid #2c2c2c; }
.account { display: flex; align-items: center; align-self: stretch; margin-left: auto; }
.signin { width: 80px; height: 14px; padding: 0 4px; gap: 6px; background: #d9d9d9; color: #3a3a3a; font-family: "Liberation Sans", sans-serif; }
.signin svg { width: 12px; height: 12px; }
.signin span { flex: 1; text-align: left; }
.caret-dark { border: 3px solid transparent; border-top: 4px solid #111; border-bottom: 0; }
.wslabel { margin: 0 4px 0 13px; font: 7px/12px "Open Sans", sans-serif; }
.wsselect { width: 91px; height: 13px; padding-left: 2px; background-color: #555; font: 7px/12px "Open Sans", sans-serif; }

.toolbar { display: flex; align-items: center; height: 23px; border-bottom: 1px solid #3a3a3a; flex: none; }
.tb { position: relative; width: 21px; height: 20px; flex: none; }
.tb svg { width: 15px; height: 15px; }
.tb.on { border-radius: 2px; background: #4f76ad; border: 1px solid #7597c6; }
.tb.dark { background: #333; }
.dim { color: #2b2b2b; }
.fly::after { content: ""; position: absolute; right: 1px; bottom: 1px; border-left: 3px solid transparent; border-bottom: 3px solid #e4e4e4; }
.sep { width: 1px; height: 10px; margin: 0 2px; background: #262626; flex: none; }
.grip { width: 2px; height: 17px; margin: 0 3px 0 2px; background: #5e5e5e; flex: none; }
.toolbar .grip:first-child { margin-right: 2px; }
.tbselect { width: 43px; height: 13px; margin: 0 2px 4px; font: 7px/12px "Open Sans", sans-serif; background-color: #575757; flex: none; }
.tbselect-sets { width: 76px; padding-right: 8px; }
.layerpick { display: flex; align-items: center; width: 137px; height: 14px; margin: 0 1px 3px; background: #5a5a5a; flex: none; }
.layerpick svg { width: 43px; height: 10px; flex: none; }
.layerpick select { flex: 1; background-color: transparent; padding-left: 0; font: 7px/12px "Open Sans", sans-serif; }

/* left icon column */
.work { display: flex; flex: 1; min-height: 0; }
.sidebar { display: flex; flex-direction: column; align-items: center; width: 23px; padding-top: 1px; overflow: hidden; flex: none; }
.handle { width: 19px; height: 2px; margin-bottom: 2px; background: #5e5e5e; flex: none; }
.sb { position: relative; width: 22px; height: 21px; flex: none; }
.sb svg { width: 15px; height: 15px; }
.rule { width: 19px; height: 1px; margin: 0 0 3px; background: #1c1c1c; flex: none; }
.main { display: flex; flex-direction: column; flex: 1; min-width: 0; }

.ribbon { margin-left: 2px; padding-left: 3px; border-left: 2px solid #5e5e5e; flex: none; }
.ribbon-tabs { display: flex; height: 12px; background: #505050; color: #a8a8a8; }
.rtab { padding: 0 14px; }
.rtab.active { margin: 1px 2px 0; width: 53px; padding: 0 4px 0 14px; border: 1px solid #777; border-bottom: 0; background: linear-gradient(#777, #555); color: #ddd; }
.rmin { margin-left: 7px; }
.rmin svg { width: 16px; height: 6px; }
.ribbon-panel { height: 15px; background: linear-gradient(#3b3b3b, #414141); padding: 0 0 1px; display: flex; }
.rpanel { padding: 0 2px; border: 1px solid #4e4e4e; background: #3f3f3f; }

.middle { display: flex; flex: 1; min-height: 0; }
.leftdock { display: flex; flex-direction: column; width: 228px; flex: none; }
.handles { display: flex; gap: 5px; padding: 4px 3px 2px 1px; }
.handles i { height: 2px; width: 40px; background: #5e5e5e; }
.handles i + i { flex: 1; }
.leftdock-body { display: flex; flex: 1; min-height: 0; }
.strip { display: flex; flex-direction: column; justify-content: flex-end; gap: 7px; align-items: center; width: 27px; border-right: 1px solid #222; background: #2d2d2d; flex: none; }
.strip-play { width: 12px; height: 12px; background: #494949; }
.strip-play svg { width: 8px; height: 8px; }
.strip-view { width: 24px; height: 30px; border: 1px solid #4b6a94; border-bottom: 5px solid #3e74c4; background: #5d6b80; }
.strip-view::before { content: ""; width: 19px; height: 19px; border: 1px solid #38455a; }

/* scene explorer */
.explorer { display: flex; flex-direction: column; flex: 1; min-width: 0; padding: 0 3px 0 17px; }
.ex-menu { display: flex; gap: 12px; padding: 2px 0 2px 10px; height: 16px; }
.ex-search { display: flex; align-items: center; gap: 1px; height: 17px; padding-left: 3px; }
.ex-search input { width: 99px; height: 15px; border: 1px solid #5a5a5a; background: #3f3f3f; }
.ex-search button { width: 16px; height: 16px; }
.ex-search button svg { width: 10px; height: 10px; }
.ex-search i { width: 1px; height: 13px; margin: 0 1px; background: #5a5a5a; }
.blue { background: #5681bb; }
.ex-search .blue svg { width: 14px; height: 12px; }
.ex-body { display: flex; gap: 2px; flex: 1; min-height: 0; }
.filters { display: flex; flex-direction: column; gap: 1px; width: 15px; padding-top: 3px; flex: none; }
.f, .g { width: 15px; height: 14px; background: #5480bb; border: 1px solid #6b93c8; }
.f:nth-of-type(3n) { margin-bottom: 1px; }
.f svg, .g svg { width: 12px; height: 11px; flex: none; }
.g { background: none; border: 0; }
.filters hr { width: 12px; margin: 1px auto; border: 0; border-top: 1px solid #666; }
.tree { display: flex; flex-direction: column; flex: 1; min-width: 0; }
.tree-head { display: flex; align-items: center; height: 16px; padding: 1px 0 0 1px; border-bottom: 1px solid #3a3a3a; overflow: hidden; flex: none; font: 7px/10px "Open Sans", sans-serif; white-space: nowrap; }
.tree-head span { flex: 1; }
.tree-head i { border: 3px solid transparent; border-bottom: 5px solid #eee; border-top: 0; margin-right: 3px; }
.tree-head b { font-weight: normal; width: 13px; overflow: hidden; }
.tree-body { display: flex; flex: 1; min-height: 0; }
#rows { flex: 1; overflow: hidden; font: 7px/12px "Open Sans", sans-serif; }
.row { display: grid; grid-template-columns: 12px 11px 11px 1fr; align-items: center; height: 12px; background: #474747; color: #dedede; }
.row svg { width: 10px; height: 8px; }
.row .lay { color: #2e2e2e; width: 9px; height: 9px; }
.row .lay.cur { color: #45b8b0; }
.row span { padding-left: 2px; background: #4c4c4c; white-space: nowrap; overflow: hidden; }
.row:nth-child(odd) span { background: #575757; }
.vscroll { display: flex; flex-direction: column; align-items: center; width: 12px; padding: 5px 0 4px; background: #ececec; flex: none; }
.vscroll .thumb { width: 10px; margin-top: 176px; flex: 1; margin-bottom: 12px; border: 1px solid #999; border-radius: 2px; background: linear-gradient(90deg, #f6f6f6, #cfcfcf); display: flex; align-items: center; justify-content: center; }
.vscroll .thumb b { width: 4px; height: 5px; background: repeating-linear-gradient(#777 0 1px, transparent 1px 2px); }
.up, .down, .lf, .rt { border: 2px solid transparent; }
.up { border-top: 0; border-bottom: 3px solid #333; }
.down { border-bottom: 0; border-top: 3px solid #333; }
.lf { border-left: 0; border-right: 3px solid #333; }
.rt { border-right: 0; border-left: 3px solid #333; }
.hscroll { display: flex; align-items: center; height: 11px; padding: 0 15px 0 4px; background: #ececec; flex: none; }
.hscroll .thumb { width: 101px; height: 9px; margin: 0 auto 0 5px; border: 1px solid #999; border-radius: 2px; background: linear-gradient(#f6f6f6, #cfcfcf); display: flex; align-items: center; justify-content: center; }
.hscroll .thumb b { width: 5px; height: 4px; background: repeating-linear-gradient(90deg, #777 0 1px, transparent 1px 2px); }
.ex-foot { display: flex; align-items: center; height: 18px; padding-left: 3px; }
.ex-foot input { width: 97px; height: 15px; padding-left: 1px; border: 1px solid #555; color: #e8e800; }
.ex-foot button { width: 16px; height: 16px; }
.ex-foot .drop { width: 12px; }
.ex-foot svg { width: 11px; height: 11px; }
.ex-foot i { width: 1px; height: 13px; margin-left: 3px; background: #5a5a5a; }

/* viewport */
.viewport { position: relative; flex: 1; margin-top: 3px; border: 1px solid #7a6a2c; background: #000; overflow: hidden; }
.scene { position: absolute; inset: 0; width: 100%; height: 100%; }
.vlabel { position: relative; padding: 2px 3px; font: 7px/12px "Noto Sans", sans-serif; }
.vlabel em { font-style: normal; color: #e8e050; }
.dialog { position: absolute; left: 265px; top: 15px; width: 314px; padding: 0 5px 5px; border: 1px solid #2b5a78; border-radius: 4px 4px 0 0; background: linear-gradient(#9dbbdc, #b9d1ea 20px, #a9cfe8 80px, #b4d2ec); }
.dlg-title { display: flex; align-items: center; gap: 2px; height: 19px; color: #111; }
.dlg-title h2 { flex: 1; padding-left: 2px; }
.dialog .winbtn { width: 21px; height: 12px; }
.dlg-body { padding: 8px 6px 6px 5px; background: #424242; font: 7px/12px "Open Sans", sans-serif; }
.tabs { display: flex; }
.tab { height: 12px; padding: 0 6px; color: #9a9a9a; background: #393939; }
.tab.active { color: #e6e6e6; background: #424242; padding: 0 5px; border: 1px solid #3a3a3a; border-bottom: 0; }
.pane { padding: 0 2px 1px; border: 1px solid #393939; }
.field { display: flex; align-items: center; height: 17px; padding-left: 4px; }
.field label { width: 140px; white-space: nowrap; flex: none; }
.field select { width: 135px; height: 14px; }
.wide label { width: 141px; }
.wide.first { padding-left: 0; }
.wide.first label { width: 145px; }
.field.wide select { width: 140px; }
.group { border: 1px solid #383838; padding: 0 0 3px; }
.group legend { margin-left: 2px; padding: 0 1px; height: 8px; line-height: 8px; }
.checks { display: flex; flex-direction: column; margin: 0 4px; padding: 4px 0 2px; border: 1px solid #3a3a3a; border-width: 1px 0; }
.checks label { height: 15px; line-height: 15px; }
label input[type="checkbox"] { appearance: none; position: relative; width: 7px; height: 7px; margin-right: 2px; background: #5e5e5e; vertical-align: middle; }
input[type="checkbox"]:checked::before { content: ""; position: absolute; inset: 0; background: #f0f0f0; clip-path: polygon(0 40%, 20% 30%, 40% 55%, 85% 0, 100% 15%, 45% 95%); }
.sub { margin: 3px 4px 0; border: 1px solid #3a3a3a; padding: 0 0 4px; }
.sub .field { padding-left: 4px; }
.sub .field label { width: 135px; }
.sub-shadow { padding-top: 3px; }
.off { color: #808080; }
.spin { display: flex; align-items: center; width: 130px; height: 14px; padding: 0 3px; background: #545454; }
.spin input { flex: 1; }
.spin i { width: 4px; height: 6px; background: linear-gradient(#bbb 2px, transparent 2px 4px, #bbb 4px); clip-path: polygon(50% 0, 100% 33%, 100% 66%, 50% 100%, 0 66%, 0 33%); }
.extra { margin-top: 4px; padding-bottom: 4px; }
.extra .field { height: 18px; }
.dlg-foot { display: flex; flex-direction: column; align-items: flex-end; margin-top: 73px; }
.dlg-foot > label { width: 101px; }
.dlg-foot div { display: flex; gap: 4px; margin-top: 3px; }
.btn { width: 48px; height: 14px; border: 1px solid #6e6e6e; border-radius: 1px; background: #5e5e5e; }
.focus { border: 1px dotted #aaa; }

/* command panel */
.command { display: flex; flex-direction: column; width: 128px; margin-left: 2px; padding: 4px 3px 0 5px; flex: none; }
.bar { height: 2px; margin-right: 2px; background: #5e5e5e; }
.ctabs { display: flex; height: 22px; align-items: center; margin: 0 -3px 0 -2px; }
.ct { width: 20px; height: 20px; margin-right: 1px; background: #3d3d3d; flex: none; }
.ct svg { width: 14px; height: 14px; }
.ct.active { background: #444; }
.arrow { flex: 1; height: 17px; margin-left: 1px; background: #5a5a5a; }
.arrow svg { width: 8px; height: 8px; flex: none; }
.namerow { display: flex; gap: 5px; margin-top: 3px; padding-right: 1px; }
.namerow input { flex: 1; height: 13px; background: #585858; }
.namerow button { width: 11px; height: 13px; background: #9c9c9c; border: 1px solid #777; }
.modlist { height: 13px; margin-top: 7px; padding-left: 1px; font: 7px/12px "Open Sans", sans-serif; flex: none; }
.stack { height: 85px; margin-top: 3px; border: 1px solid #e6e6e6; flex: none; }
.stacktools { display: flex; align-items: center; justify-content: space-between; padding: 4px 17px 0 0; }
.stacktools button { width: 15px; height: 15px; }
.stacktools svg { width: 12px; height: 12px; }
.stacktools .sel { background: #48648c; }
.stacktools i { width: 1px; height: 11px; background: #222; }
.roll { height: 1px; margin: 12px 3px 0; background: #5e5e5e; display: flex; justify-content: center; }
.roll b { width: 9px; height: 2px; background: #888; }

/* time slider */
.timeline { display: flex; flex-direction: column; height: 36px; flex: none; }
.slider { display: flex; gap: 1px; height: 16px; margin-left: 1px; padding: 4px 0 0 3px; border-left: 2px solid #5e5e5e; text-align: center; line-height: 12px; }
.slider button { width: 10px; background: #555; }
.slider span { width: 82px; background: #5b5b5b; border-radius: 1px; }
.track { display: flex; height: 20px; margin-right: 32px; }
.mini { width: 14px; height: 10px; margin: 4px 10px 0 14px; flex: none; }
.ruler { display: flex; flex: 1; background: #292929; }
.tick { display: flex; flex-direction: column; flex: 1 1 0; align-items: center; min-width: 0; white-space: nowrap; color: #b8b8b8; }
.tick::before { content: ""; width: 1px; height: 8px; background: #5a5a5a; flex: none; }
.tick.major::before { height: 9px; background: #888; }
.tick span { line-height: 10px; }
.tick.now { background: linear-gradient(90deg, transparent 3px, #8b8223 3px 9px, transparent 9px); }

/* status bar */
.status { display: flex; height: 33px; padding: 2px 0 1px 3px; font: 7px/12px "Open Sans", sans-serif; flex: none; }
.listener { width: 64px; flex: none; }
.pink { height: 14px; margin-bottom: 1px; background: #dcc4c6; }
.listener input { width: 100%; height: 13px; padding-left: 3px; background: #f5f5f5; color: #666; font: 8px/12px "Liberation Mono", monospace; }
.prompt { display: flex; flex-direction: column; justify-content: space-between; flex: 1; padding: 2px 0 0 5px; margin-left: 1px; border-left: 1px solid #222; white-space: nowrap; }
.coords { display: flex; flex-direction: column; gap: 3px; width: 292px; flex: none; }
.crow { display: flex; align-items: center; height: 14px; white-space: nowrap; }
.crow svg { width: 12px; height: 12px; margin-right: 6px; flex: none; }
.crow svg + svg + svg { margin-right: 4px; }
.crow input { width: 38px; height: 13px; padding-left: 1px; margin: 0 10px 0 2px; background: #525252; color: #858585; }
.tag { gap: 4px; margin-left: 205px; height: 13px; align-self: flex-start; }
.tag svg { width: 13px; height: 12px; }
.play { display: flex; flex-direction: column; gap: 2px; width: 82px; flex: none; }
.prow { display: flex; align-items: center; justify-content: space-between; height: 14px; }
.prow button { position: relative; width: 16px; height: 13px; }
.prow svg { width: 12px; height: 10px; }
.frame { width: 47px; height: 12px; }
.bigkey { width: 28px; height: 28px; margin: 1px 4px 0 7px; background: #5c5c5c; flex: none; }
.bigkey svg { width: 24px; height: 24px; }
.keys { display: grid; grid-template-columns: 30px 77px; gap: 2px 3px; flex: none; align-content: start; }
.btn2 { height: 14px; background: #5c5c5c; font-size: 7px; white-space: nowrap; }
.keysel { height: 14px; background-color: #5c5c5c; }
.kf { display: flex; gap: 4px; align-items: center; }
.kf svg { width: 13px; height: 12px; }
.kf .btn2 { flex: 1; }
.nav { display: grid; grid-template-columns: repeat(4, 16px); margin: 0 5px; flex: none; }
.nav button { position: relative; width: 16px; height: 15px; }
.nav svg { width: 11px; height: 11px; }
```

FILE: app.js
```js
var names = ("COCINA-RODAPIE COCINA-SILLA COCINA-TOPE COMEDOR CONTENEDOR DECORATIVO-CENICERO DECORATIVO-CUADRO " +
  "DECORATIVO-ESCULTURA DECORATIVO-MOSAICO DECORATIVO-RELOJ DECORATIVO-SWITCH DECORATIVO-TAZON DECORATIVO-TELEVISOR " +
  "DECORATIVO-TOMA ESCALERA ESTANTERIA FONDO ILUMINACION LOSA.ENT LOSA.TEC LUMINARIA MESITA MOLDURA MURO PERSIANA PISO " +
  "PISO-CERAMICA PUERTA.ALU PUERTA.MAD PUERTA.MET RODAPIE SOFA VEGETACION-ARBOL VEGETACION-ARBUSTO VEGETACION-GRAMA " +
  "VEGETACION-PALMERA VEGETACION-TREPADORA VENTANA").split(" ");
document.getElementById("rows").innerHTML = names.map(function (n) {
  var cur = n === "ILUMINACION";
  return '<li class="row"><svg viewBox="0 0 10 8">' + (cur ? '<path d="M5 0v8l4-4z" fill="#fff"/>' : "") +
    '</svg><svg><use href="#eye"/></svg><svg class="lay' + (cur ? " cur" : "") +
    '"><use href="#layers"/></svg><span>3D-' + n + "</span></li>";
}).join("");

var ticks = "";
for (var f = 0; f <= 100; f++) {
  ticks += '<div class="tick' + (f % 5 ? "" : " major") + (f ? "" : " now") + '">' + (f % 5 ? "" : "<span>" + f + "</span>") + "</div>";
}
document.getElementById("ruler").innerHTML = ticks;

// Home grid: 14 x 14 cells in perspective, spanned by four corners.
var L = [287, 357.5], T = [709.7, 157], R = [1210.5, 300.4], B = [899.8, 696.2];
var dx1 = T[0] - R[0], dx2 = B[0] - R[0], sx = L[0] - T[0] + R[0] - B[0];
var dy1 = T[1] - R[1], dy2 = B[1] - R[1], sy = L[1] - T[1] + R[1] - B[1];
var det = dx1 * dy2 - dx2 * dy1;
var g = (sx * dy2 - dx2 * sy) / det, h = (dx1 * sy - sx * dy1) / det;
function pt(u, v) {
  var w = g * u + h * v + 1;
  var x = ((T[0] - L[0] + g * T[0]) * u + (B[0] - L[0] + h * B[0]) * v + L[0]) / w;
  var y = ((T[1] - L[1] + g * T[1]) * u + (B[1] - L[1] + h * B[1]) * v + L[1]) / w;
  return x.toFixed(1) + " " + y.toFixed(1);
}
var lines = "", axes = "";
for (var i = 0; i <= 14; i++) {
  var seg = "M" + pt(i / 14, 0) + "L" + pt(i / 14, 1) + "M" + pt(0, i / 14) + "L" + pt(1, i / 14);
  if (i === 7) { axes = seg; } else { lines += seg; }
}
var plane = "M504 344L761 228L1023 312L819 501z";
document.getElementById("scene").innerHTML =
  '<clipPath id="pc"><path d="' + plane + '"/></clipPath>' +
  '<path d="' + lines + '" fill="none" stroke="#404040"/>' +
  '<path d="' + plane + '" fill="#919191" stroke="#000" stroke-width="3"/><path d="' + plane + '" fill="#919191"/>' +
  '<g clip-path="url(#pc)" fill="none"><path d="' + lines + '" stroke="#7c7c7c" stroke-dasharray="3 1"/><path d="' + axes + '" stroke="#666" stroke-dasharray="3 1"/></g>' +
  '<ellipse cx="1113" cy="131" rx="21" ry="11" fill="none" stroke="#7c8088" stroke-width="4"/>' +
  '<path d="M1099 111l13-6 14 5-1 15-12 10-13-8z" fill="#8e8e8e"/><path d="M1099 111l14 5 13-6-14-5z" fill="#9c9c9c"/><path d="M1113 116v19l12-10 1-15z" fill="#848484"/>' +
  '<path d="M1104 122l5 2M1118 122l5-3M1110 110l5 1" stroke="#6a6a6a" stroke-width="2"/><path d="M1094 142l6-6M1093 137l7 3M1129 136l6 3" stroke="#aaa"/>' +
  '<path d="M269 602v-14" stroke="#2238c8"/><path d="M269 602l11-6" stroke="#a82020"/><path d="M269 602l-11-5" stroke="#208820"/>' +
  '<path d="M271 586h3l-3 4h3" stroke="#2238c8" fill="none"/><path d="M279 593l4 4M283 593l-4 4" stroke="#a82020"/><path d="M256 595l2 2 2-2M258 597v3" stroke="#208820" fill="none"/>';
```
